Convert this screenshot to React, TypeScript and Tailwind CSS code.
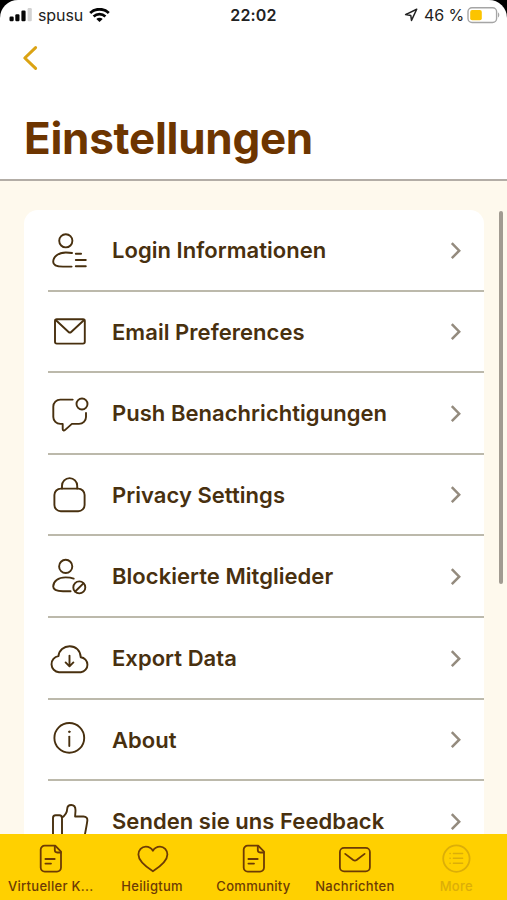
import type { ReactNode } from "react";

type Row = {
  label: string;
  icon: ReactNode;
};

const rows: Row[] = [
  {
    label: "Login Informationen",
    icon: (
      <>
        <circle cx="17.8" cy="11.8" r="6.6" />
        <path d="M24 24c-1.6-.4-3.4-.5-6.2-.5C10.400 23.500 5.200 27.600 5.200 33c0 3 3.600 4.600 9.800 4.600h8.600M27.800 24.700h5.300M27.800 31h10M27.800 37.200h10" />
      </>
    ),
  },
  {
    label: "Email Preferences",
    icon: (
      <>
        <rect x="7" y="9.2" width="29.8" height="24.4" rx="1.8" />
        <path d="M7.7 10 20.6 22q1.3 1.2 2.6 0L36.1 10" />
      </>
    ),
  },
  {
    label: "Push Benachrichtigungen",
    icon: (
      <>
        <path d="M24.7 7.6H12.3a7 7 0 0 0-7 7v10.3a7 7 0 0 0 7 7h2.4v5.2c0 1.4 1.2 1.8 2.2 1l7-6.2H31a7 7 0 0 0 7-7v-3.9" />
        <circle cx="34" cy="12" r="5.5" />
      </>
    ),
  },
  {
    label: "Privacy Settings",
    icon: (
      <>
        <rect x="6.4" y="15.6" width="30.2" height="22.7" rx="6.4" />
        <path d="M14 15.6v-2.9a7.6 7.6 0 0 1 15.2 0v2.9" />
      </>
    ),
  },
  {
    label: "Blockierte Mitglieder",
    icon: (
      <>
        <circle cx="17.7" cy="11.4" r="6.6" />
        <path d="M25.7 23.6C23 22.6 20.4 22.4 17.6 22.400 10.200 22.400 5.200 26.400 5.200 31.600c0 3 3.600 4.600 9.800 4.600h7.600" />
        <circle cx="31.3" cy="32.4" r="6" />
        <path d="m27.2 36.5 8.2-8.2" />
      </>
    ),
  },
  {
    label: "Export Data",
    icon: (
      <>
        <path d="M11 35.2a8.100 8.100 0 0 1-.5-16.100C10.900 13.200 15.800 9.200 21.700 9.200S32.500 13.400 32.700 20.300a7.500 7.500 0 0 1 .2 14.900ZM21.500 18.600v10.500M17.600 25.400l3.900 3.900 3.900-3.900" />
      </>
    ),
  },
  {
    label: "About",
    icon: (
      <>
        <circle cx="21.3" cy="19.9" r="14.9" />
        <path d="M21.3 18.6v9.4" />
        <circle cx="21.3" cy="13.8" r="0.8" fill="currentColor" strokeWidth="1" />
      </>
    ),
  },
  {
    label: "Senden sie uns Feedback",
    icon: (
      <path d="M14 37V18.2c0-2-.8-2.900-2.600-2.900H7.600c-1.800 0-2.600.9-2.600 2.600V37M13.800 17.600c3.400-2 5.200-4.600 5.400-8.600.1-2.600 1.600-4 4-4 2.800 0 4.300 1.900 4.300 5.200 0 2.400-.4 4.400-.4 6.300h8.400c2.600 0 4.200 1.800 3.800 4.400-.5 4-1.500 9-2.500 14.100" />
    ),
  },
];

const documentIcon = (
  <>
    <path d="M12.700 2.600h10.500l5.800 6v16a4 4 0 0 1-4 4H12.700a4 4 0 0 1-4-4v-18a4 4 0 0 1 4-4Z" />
    <path d="M22.800 2.900v4.200a2.400 2.400 0 0 0 2.400 2.400h3.600M13.400 16h9.300M13.400 20.600h5.600" />
  </>
);

const tabs = [
  { label: "Virtueller K...", icon: documentIcon },
  {
    label: "Heiligtum",
    icon: (
      <path d="M18.9 28.3C13.7 25 4.4 19 4.4 11.6c0-4.6 3.4-8 7.4-8 3.2 0 5.6 1.6 7.1 4.2 1.5-2.6 3.9-4.2 7.1-4.2 4 0 7.4 3.4 7.4 8 0 7.4-9.3 13.4-14.5 16.7Z" />
    ),
  },
  { label: "Community", icon: documentIcon },
  {
    label: "Nachrichten",
    icon: (
      <>
        <rect x="3.9" y="4.8" width="30" height="23.6" rx="4.2" />
        <path d="m9.2 10.9 8 6.1q1.7 1.2 3.4 0l8-6.1" />
      </>
    ),
  },
  {
    label: "More",
    muted: true,
    icon: (
      <>
        <circle cx="18.4" cy="15.6" r="13.2" />
        <path
          strokeWidth="1.5"
          d="M15.4 10.4h9.2M15.4 15.3h9.2M15.4 20.2h9.2M12 10.4h.2M12 15.3h.2M12 20.2h.2"
        />
      </>
    ),
  },
];

function StatusBar() {
  return (
    <div className="grid h-[30px] grid-cols-[1fr_auto_1fr] items-center text-[#222]">
      <div className="flex items-center pl-[9px]">
        <svg width="24" height="14" viewBox="0 0 24 14" fill="#050505">
          <rect x="0.5" y="8.6" width="4.2" height="4.6" rx="1.2" />
          <rect x="6.3" y="6.2" width="4.2" height="7" rx="1.2" />
          <rect x="12.4" y="2.6" width="4.2" height="10.6" rx="1.2" />
          <rect x="18.6" y="0" width="4.2" height="13.2" rx="1.2" fill="#d2d2d2" />
        </svg>
        <span className="ml-[5px] text-[16px] leading-[30px] tracking-[-0.1px]">spusu</span>
        <svg className="ml-[6px]" width="21" height="15" viewBox="0 0 21 15" fill="none" stroke="#050505">
          <path strokeWidth="2.8" d="M1.2 4.9C6.4 0 14.6 0 19.8 4.9" />
          <path strokeWidth="2.7" d="M4.6 8.5c3.3-3.1 8.5-3.1 11.8 0" />
          <path fill="#050505" stroke="none" d="M10.5 14.1 7.3 10.9c1.8-1.6 4.6-1.6 6.4 0Z" />
        </svg>
      </div>
      <span className="text-[16px] font-semibold tracking-[0.2px]">22:02</span>
      <div className="flex items-center justify-end pr-[7px]">
        <svg width="14" height="14" viewBox="0 0 14 14" fill="none" stroke="#222" strokeWidth="1.5" strokeLinejoin="round">
          <path d="M12.7 1.3 1.6 6.6l5.2.9.7 4.9Z" />
        </svg>
        <span className="ml-[6px] text-[16px] leading-[30px] tracking-[-0.1px]">46 %</span>
        <svg className="ml-[3px]" width="33" height="17" viewBox="0 0 33 17" fill="none">
          <rect x="1" y="0.7" width="28.6" height="14.8" rx="4" stroke="#a5a5a5" strokeWidth="1.4" />
          <rect x="3.2" y="3" width="11.6" height="10.2" rx="2" fill="#fcc400" />
          <path d="M31 5.6c1.7.5 1.7 4.3 0 4.8Z" fill="#a5a5a5" />
        </svg>
      </div>
    </div>
  );
}

function SettingsRow({ row }: { row: Row }) {
  return (
    <div className="flex h-[81.6px] shrink-0 items-center border-b-2 border-[#bcb9ab] pt-[1.5px]">
      <svg
        className="shrink-0"
        width="44"
        height="44"
        viewBox="0 0 44 44"
        fill="none"
        stroke="currentColor"
        strokeWidth="1.9"
        strokeLinecap="round"
        strokeLinejoin="round"
      >
        {row.icon}
      </svg>
      <span className="ml-5 flex-1 whitespace-nowrap text-[22px] font-semibold tracking-[0.04px]">
        {row.label}
      </span>
      <svg className="mr-[21px]" width="14" height="20" viewBox="0 0 14 20" fill="none" stroke="#948b7e" strokeWidth="2.5">
        <path d="m2.8 2.2 7.4 7.5-7.4 7.5" />
      </svg>
    </div>
  );
}

export default function App() {
  return (
    <div className="h-[900px] w-[507px] overflow-hidden bg-black font-['Inter',sans-serif]">
      <div className="flex h-full flex-col overflow-hidden rounded-t-[18px] bg-white">
        <header className="h-[181px] shrink-0 border-b-2 border-[#b3ada6]">
          <StatusBar />
          <button className="ml-[21px] mt-[15px] block">
            <svg width="18" height="26" viewBox="0 0 18 26" fill="none" stroke="#dba313" strokeWidth="3" strokeLinecap="round" strokeLinejoin="round">
              <path d="M14.6 2.6 3.8 13l10.8 10.4" />
            </svg>
          </button>
          <h1 className="ml-6 mt-[39px] text-[44px] font-bold leading-[56px] tracking-[-0.28px] text-[#6d3500]">
            Einstellungen
          </h1>
        </header>

        <main className="flex min-h-0 flex-1 overflow-hidden bg-[#fef9ed] pl-6 pt-[29px]">
          <div className="flex w-[460px] shrink-0 flex-col overflow-hidden rounded-t-[14px] bg-white pl-6 text-[#48300f]">
            {rows.map((row) => (
              <SettingsRow key={row.label} row={row} />
            ))}
          </div>
          <div className="ml-[14.5px] mt-px h-[373px] w-1 shrink-0 rounded-full bg-[#a19b91]" />
        </main>

        <nav className="grid h-[66px] shrink-0 grid-cols-5 bg-[#ffd000]">
          {tabs.map((tab) => (
            <div
              key={tab.label}
              className={`flex flex-col items-center pt-[9px] ${tab.muted ? "text-[#dcae08]" : "text-[#6d3b05]"}`}
            >
              <svg
                width="37"
                height="32"
                viewBox="0 0 37 32"
                fill="none"
                stroke="currentColor"
                strokeWidth="1.8"
                strokeLinecap="round"
                strokeLinejoin="round"
              >
                {tab.icon}
              </svg>
              <span className="mt-[2px] whitespace-nowrap text-[13px] font-medium leading-[18px] tracking-[0.3px]">
                {tab.label}
              </span>
            </div>
          ))}
        </nav>
      </div>
    </div>
  );
}
